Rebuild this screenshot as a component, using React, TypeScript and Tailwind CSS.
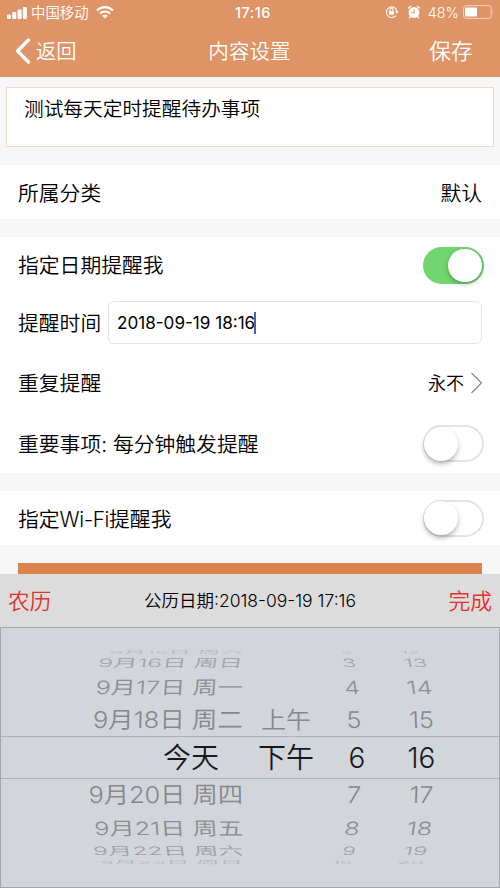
import React from "react";

const SANS = "font-['Inter','Noto_Sans_CJK_SC',sans-serif]";

function Switch({ on = false }: { on?: boolean }) {
  return on ? (
    <div className="flex h-[37px] w-[61px] shrink-0 items-center justify-end rounded-full bg-[#71d66f] pr-[2px]">
      <div className="h-[33px] w-[34px] rounded-full bg-white shadow-[0_2px_5px_rgba(0,0,0,0.3)]" />
    </div>
  ) : (
    <div className="flex h-[37px] w-[61px] shrink-0 items-center rounded-full border-2 border-[#e3e3e3] bg-white">
      <div className="-ml-px h-[34px] w-[34px] rounded-full bg-white shadow-[0_3px_5px_rgba(0,0,0,0.28)]" />
    </div>
  );
}

function StatusBar() {
  return (
    <div className="grid h-[25px] grid-cols-3 items-center pl-[7px] pr-[6px] text-white">
      <div className="flex items-center">
        <svg width="20" height="12" viewBox="0 0 20 12" fill="currentColor">
          <rect x="0" y="7.5" width="4" height="4.5" rx="1" />
          <rect x="5.3" y="5" width="4" height="7" rx="1" />
          <rect x="10.6" y="2.5" width="4" height="9.5" rx="1" />
          <rect x="15.8" y="0" width="4" height="12" rx="1" />
        </svg>
        <span className="ml-[4px] pt-[2px] text-[14.4px] leading-none">中国移动</span>
        <svg className="ml-[7px]" width="18" height="13" viewBox="0 0 18 13" fill="none" stroke="currentColor" strokeWidth="2.2">
          <path d="M1 4.6C5.5 0 12.5 0 17 4.6" />
          <path d="M4 7.6c2.8-2.8 7.200-2.800 10 0" />
          <path d="M9 12.500 6.200 9.700c1.500-1.400 4.100-1.400 5.600 0Z" fill="currentColor" stroke="none" />
        </svg>
      </div>
      <div className="pl-[5px] pt-px text-center text-[14.500px] font-medium leading-none tracking-[0.5px]">17:16</div>
      <div className="flex items-center justify-end">
        <svg width="14" height="14" viewBox="0 0 14 14" fill="none" stroke="currentColor" strokeWidth="1.1">
          <path d="M10.800 10.600A5.300 5.300 0 1 1 11.900 6.300" />
          <path d="M10 6.200h3.800L11.900 8.800Z" fill="currentColor" stroke="none" />
          <rect x="4" y="6" width="5" height="3.800" rx=".4" fill="currentColor" stroke="none" />
          <path d="M5 6.200V4.800a1.500 1.500 0 0 1 3 0v1.400" />
        </svg>
        <svg className="ml-[8px]" width="14" height="14" viewBox="0 0 14 14" fill="none">
          <circle cx="7" cy="7.500" r="5.400" fill="white" />
          <path d="M1.600 3 3.600 1.500M12.400 3 10.400 1.500M3.200 11.800l-.7.900M10.800 11.800l.7.900" stroke="white" strokeWidth="1.500" strokeLinecap="round" />
          <path d="M7.200 4.300v3.400H4.500" stroke="#de9466" strokeWidth="1" />
        </svg>
        <span className="ml-[7px] pt-px text-[14.300px] leading-none">48%</span>
        <svg className="ml-[4px]" width="31" height="14" viewBox="0 0 31 14" fill="none">
          <rect x=".6" y=".6" width="27.500" height="12.800" rx="2.500" stroke="white" strokeOpacity=".6" />
          <rect x="2" y="2.500" width="12" height="9" rx=".8" fill="white" />
          <path d="M29.500 5q1.500 2 0 4Z" fill="white" fillOpacity=".6" />
        </svg>
      </div>
    </div>
  );
}

function Header() {
  return (
    <header className="h-[77px] bg-[#de9466] text-white">
      <StatusBar />
      <div className="flex h-[52px] items-center justify-between pl-[15px] pr-[27px] font-[350]">
        <div className="flex w-[70px] items-center">
          <svg width="16" height="26" viewBox="0 0 16 26" fill="none" stroke="currentColor" strokeWidth="3.200" strokeLinecap="round" strokeLinejoin="round">
            <path d="M13.500 2 2.500 13l11 11" />
          </svg>
          <span className="ml-[5px] whitespace-nowrap pt-[2px] text-[20.300px] leading-none">返回</span>
        </div>
        <h1 className="pl-[11px] pt-[2px] text-[20.600px] leading-none">内容设置</h1>
        <div className="w-[70px] text-right text-[22px] leading-none">保存</div>
      </div>
    </header>
  );
}

type WheelRow = {
  date: string;
  period?: string;
  hour: string;
  minute: string;
  row: string;
  dateShape: string;
  hourShape: string;
  minuteShape: string;
};

const wheel: WheelRow[] = [
  { date: "9月15日 周六", hour: "2", minute: "12", row: "h-[8px] text-[#b8bbc0]", dateShape: "scale-x-[0.91] scale-y-[0.16]", hourShape: "-translate-x-[10px] scale-x-[0.8] scale-y-[0.16]", minuteShape: "-translate-x-[11px] scale-x-[0.8] scale-y-[0.16]" },
  { date: "9月16日 周日", hour: "3", minute: "13", row: "h-[14px] text-[#a0a3a8]", dateShape: "scale-x-[0.985] scale-y-[0.46] -skew-x-4", hourShape: "-translate-x-[8px] scale-x-[0.9] scale-y-[0.46] skew-x-6", minuteShape: "-translate-x-[6px] scale-x-[0.95] scale-y-[0.46] skew-x-6" },
  { date: "9月17日 周一", hour: "4", minute: "14", row: "h-[34px] text-[#8c8f94]", dateShape: "scale-x-[1.01] scale-y-[0.73] -skew-x-3", hourShape: "-translate-x-[5px] scale-y-[0.73] skew-x-6", minuteShape: "-translate-x-[2px] scale-y-[0.73] skew-x-6" },
  { date: "9月18日 周二", period: "上午", hour: "5", minute: "15", row: "h-[32px] text-[#85888d]", dateShape: "scale-x-[1.02] scale-y-[0.92] -skew-x-1", hourShape: "-translate-x-[3px] scale-y-[0.92] skew-x-2", minuteShape: "scale-y-[0.92] skew-x-2" },
  { date: "今天", period: "下午", hour: "6", minute: "16", row: "h-[43px] border-y border-[#aeb1b7] text-[#17191c] text-[28px]", dateShape: "-translate-x-[24px]", hourShape: "", minuteShape: "" },
  { date: "9月20日 周四", hour: "7", minute: "17", row: "h-[32px] text-[#85888d]", dateShape: "scale-x-[1.01] scale-y-[0.92] skew-x-1", hourShape: "-translate-x-[3px] scale-y-[0.92] -skew-x-2", minuteShape: "scale-y-[0.92] -skew-x-2" },
  { date: "9月21日 周五", hour: "8", minute: "18", row: "h-[34px] text-[#8a8d92]", dateShape: "scale-x-[1.01] scale-y-[0.73] skew-x-3", hourShape: "-translate-x-[5px] scale-y-[0.73] -skew-x-6", minuteShape: "-translate-x-[2px] scale-y-[0.73] -skew-x-6" },
  { date: "9月22日 周六", hour: "9", minute: "19", row: "h-[12px] text-[#9da0a5]", dateShape: "scale-x-[0.98] scale-y-[0.46] skew-x-4", hourShape: "-translate-x-[8px] scale-x-[0.9] scale-y-[0.46] -skew-x-6", minuteShape: "-translate-x-[6px] scale-x-[0.95] scale-y-[0.46] -skew-x-6" },
  { date: "9月23日 周日", hour: "10", minute: "20", row: "h-[10px] text-[#b4b7bc]", dateShape: "scale-x-[0.94] scale-y-[0.16]", hourShape: "-translate-x-[15px] scale-x-[0.8] scale-y-[0.16]", minuteShape: "-translate-x-[11px] scale-x-[0.9] scale-y-[0.16]" },
];

function Wheel() {
  return (
    <div className="flex h-[261px] flex-col overflow-hidden border border-[#a5a7ac] bg-[#d2d5da] pt-[20px] text-[25px] font-[350]">
      {wheel.map((r) => (
        <div key={r.date} className={`grid shrink-0 grid-cols-[242px_83px_62px_67px] grid-rows-[100%] items-center whitespace-nowrap leading-none ${r.row}`}>
          <span className={`origin-right text-right ${r.dateShape}`}>{r.date}</span>
          <span className={`pl-[3px] text-center ${r.period === "上午" ? "scale-y-[0.9]" : ""}`}>{r.period}</span>
          <span className={`text-center ${r.hourShape}`}>{r.hour}</span>
          <span className={`text-center ${r.minuteShape}`}>{r.minute}</span>
        </div>
      ))}
    </div>
  );
}

export default function App() {
  return (
    <div className={`flex h-[888px] w-[500px] flex-col overflow-hidden bg-[#f7f7f7] text-[20.800px] font-[350] leading-none text-black ${SANS}`}>
      <Header />
      <div className="h-[88px] px-[6px] pt-[10px]">
        <div className="h-[60px] border border-[#f0d9cb] bg-white pl-[17px] pt-[12px] text-[19.700px]">测试每天定时提醒待办事项</div>
      </div>

      <section className="flex h-[54px] items-center justify-between bg-white px-[18px] pt-[5px]">
        <span>所属分类</span>
        <span>默认</span>
      </section>

      <section className="mt-[18px] h-[236px] bg-white pl-[18px]">
        <div className="flex h-[56px] items-center justify-between pr-[16px]">
          <span className="pt-[2px]">指定日期提醒我</span>
          <Switch on />
        </div>
        <div className="flex h-[59px] items-center pr-[18px]">
          <span className="w-[90px] shrink-0 pt-[3px]">提醒时间</span>
          <div className="flex h-[43px] grow items-center rounded-[6px] border border-[#e4e4e4] pl-[8px] text-[17.100px] font-normal">
            <span>2018-09-19 18:16</span>
            <span className="-ml-px h-[22px] w-[2px] bg-[#4362c8]" />
          </div>
        </div>
        <div className="flex h-[62px] items-center justify-between pr-[17px]">
          <span className="pt-[2px]">重复提醒</span>
          <div className="flex items-center text-[18px]">
            <span className="pt-px">永不</span>
            <svg className="ml-[6px]" width="13" height="22" viewBox="0 0 13 22" fill="none" stroke="#858585" strokeWidth="1.200">
              <path d="m1.500 1 10 10-10 10" />
            </svg>
          </div>
        </div>
        <div className="flex h-[59px] items-center justify-between pr-[16px]">
          <span className="pt-[3px]">重要事项: 每分钟触发提醒</span>
          <Switch />
        </div>
      </section>

      <section className="mt-[18px] flex h-[54px] items-center justify-between bg-white pl-[18px] pr-[16px]">
        <span className="pt-[4px]">指定<span className="tracking-[-0.4px]">Wi-Fi</span>提醒我</span>
        <Switch />
      </section>

      <div className="mx-[18px] mt-[18px] h-[11px] shrink-0 bg-[#dc824d]" />

      <div className="flex h-[53px] shrink-0 items-center justify-between bg-[#dcdcdc] px-[8px]">
        <span className="pt-[3px] text-[21.800px] text-[#e5302b]">农历</span>
        <span className="pt-px text-[17.500px] text-black">公历日期:2018-09-19 17:16</span>
        <span className="pt-[3px] text-[21.800px] text-[#e5302b]">完成</span>
      </div>
      <Wheel />
    </div>
  );
}
